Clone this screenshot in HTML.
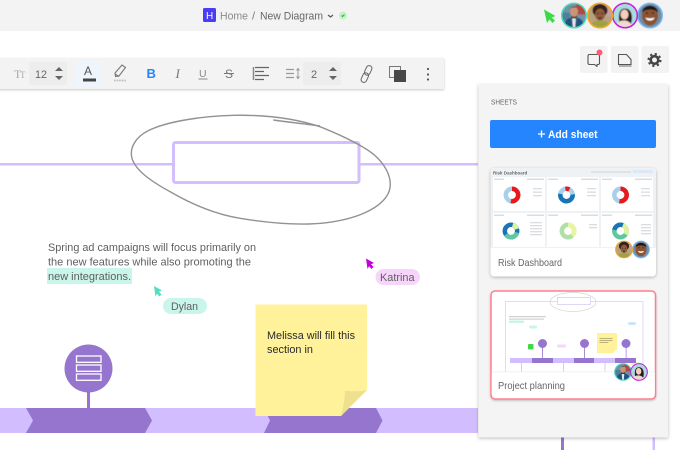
<!DOCTYPE html>
<html><head><meta charset="utf-8"><style>
html,body{margin:0;padding:0;width:680px;height:450px;overflow:hidden;background:#fff}
svg{display:block}
text{font-family:"Liberation Sans",sans-serif}
</style></head><body>
<svg width="680" height="450" viewBox="0 0 680 450" xmlns="http://www.w3.org/2000/svg">
<defs>
<filter id="sh" x="-10%" y="-10%" width="120%" height="120%"><feDropShadow dx="0" dy="1" stdDeviation="1.500" flood-color="#000" flood-opacity=".28"/></filter>
<filter id="sh2" x="-10%" y="-10%" width="120%" height="120%"><feDropShadow dx="0" dy="1" stdDeviation="1" flood-color="#000" flood-opacity=".22"/></filter>
<filter id="bl"><feGaussianBlur stdDeviation=".5"/></filter>
<filter id="bl2"><feGaussianBlur stdDeviation=".3"/></filter>
<clipPath id="av"><circle cx="0" cy="0" r="12"/></clipPath>
<g id="a1"><g clip-path="url(#av)"><g filter="url(#bl)"><rect x="-13" y="-13" width="26" height="26" fill="#6f93a8"/><rect x="2" y="-13" width="11" height="12" fill="#b2493f"/><rect x="-13" y="-3" width="9" height="8" fill="#4d7f9c"/><path d="M-10 13c0-9 4-11 10-11s10 2 10 11z" fill="#24527f"/><path d="M-2 2h4l-1 11h-2z" fill="#e3e8ee"/><ellipse cx="0" cy="-4" rx="4" ry="5.500" fill="#c89677"/><path d="M-4-6c0-4 8-4 8 0l-1-2h-6z" fill="#2b2320"/><path d="M-3.500-1c1 3 6 3 7 0l-1 4h-5z" fill="#4a3228"/></g></g><circle r="12.300" fill="none" stroke="#4fdcc0" stroke-width="1.500"/></g>
<g id="a2"><g clip-path="url(#av)"><g filter="url(#bl)"><rect x="-13" y="-13" width="26" height="26" fill="#b9a27a"/><rect x="3" y="-13" width="10" height="14" fill="#c9a0a0"/><ellipse cx="0" cy="-5" rx="7.500" ry="6.500" fill="#33241c"/><ellipse cx="0" cy="-1" rx="5" ry="6" fill="#8f5c3e"/><path d="M-10 13c0-6 4-8 10-8s10 2 10 8z" fill="#9da24a"/><ellipse cx="0" cy="2.500" rx="1.800" ry="1" fill="#5b2b22"/><circle cx="-2" cy="-2" r=".7" fill="#1c1210"/><circle cx="2" cy="-2" r=".7" fill="#1c1210"/></g></g><circle r="12.300" fill="none" stroke="#f5a623" stroke-width="1.500"/></g>
<g id="a3"><g clip-path="url(#av)"><g filter="url(#bl)"><rect x="-13" y="-13" width="26" height="26" fill="#a9dbdc"/><path d="M-5 10c-2-8-2-17 5-17 7 0 8 9 6 15l-3 2z" fill="#211a1c"/><ellipse cx="-.5" cy="-1" rx="4" ry="5" fill="#f4cdbb"/><path d="M-9 13c0-6 3-8 8-8s8 3 8 8z" fill="#f0d9cf"/></g></g><circle r="12.300" fill="none" stroke="#c21fe0" stroke-width="1.500"/></g>
<g id="a4"><g clip-path="url(#av)"><g filter="url(#bl)"><rect x="-13" y="-13" width="26" height="26" fill="#6f8ea8"/><ellipse cx="0" cy="0" rx="8" ry="10" fill="#8a5233"/><path d="M-8-3c0-9 16-9 16 0-3-4-13-4-16 0z" fill="#1e1512"/><path d="M-4.500 2c2 1 7 1 9 0-.5 4-8.500 4-9 0z" fill="#fff"/><circle cx="-3" cy="-2.500" r=".8" fill="#140d0b"/><circle cx="3" cy="-2.500" r=".8" fill="#140d0b"/></g></g><circle r="12.300" fill="none" stroke="#7bbcf5" stroke-width="1.500"/></g>
</defs>

<rect width="680" height="450" fill="#fff"/>
<rect width="680" height="31" fill="#f3f3f3"/>

<!-- breadcrumb -->
<rect x="203" y="8" width="13" height="14" rx="1.500" fill="#4a3df2"/>
<text x="206" y="19" font-size="10" fill="#fff">H</text>
<text x="220" y="19.500" font-size="11" fill="#8a8a8a" textLength="28" lengthAdjust="spacingAndGlyphs">Home</text>
<text x="252" y="19.500" font-size="11" fill="#777">/</text>
<text x="260" y="19.500" font-size="11" fill="#666" textLength="63" lengthAdjust="spacingAndGlyphs">New Diagram</text>
<path d="M328 15l2.500 2 2.500-2" fill="none" stroke="#555" stroke-width="1.200"/>
<circle cx="343" cy="15.500" r="4" fill="#c5f1c5"/>
<path d="M341.500 15.500l1 1 2-2" fill="none" stroke="#2fa84a" stroke-width="1"/>

<!-- presence -->
<path d="M544 9.500l11.500 6.500-4 1.500 3.500 3-2.500 2.500-3-3.500-2.500 3.500z" fill="#3fd84a"/>
<use href="#a4" x="650" y="15.500"/>
<use href="#a3" x="625" y="15.500"/>
<use href="#a2" x="600" y="15.500"/>
<use href="#a1" x="574" y="15.500"/>

<!-- canvas: line + rect -->
<rect x="0" y="163" width="172" height="2.500" fill="#d2bdff"/>
<rect x="360" y="163" width="118" height="2.500" fill="#d2bdff"/>
<rect x="173.500" y="142.500" width="185.500" height="40" rx="2" fill="#fff" stroke="#d2bfff" stroke-width="3"/>
<g transform="translate(120 110) scale(.3333)" fill="none" stroke="#929292" stroke-width="4.200">
<path d="M460 30C500 36 560 42 600 48"/>
<path d="M600 50C520 24 430 14 340 16C250 18 140 34 85 62C45 82 28 115 36 145C46 180 90 212 150 245C210 280 280 312 360 325C440 338 540 348 620 338C700 328 780 300 805 250C825 205 790 145 730 112C690 88 640 66 600 50"/>
</g>

<!-- toolbar -->
<rect x="-6" y="58" width="450" height="31" fill="#f3f3f3" filter="url(#sh2)"/>
<text x="14" y="78" font-size="12" fill="#aaa" style="font-family:'Liberation Serif',serif">T</text>
<text x="20" y="78" font-size="9" fill="#aaa" style="font-family:'Liberation Serif',serif">T</text>
<rect x="29" y="62" width="38" height="23" rx="1" fill="#ededed"/>
<text x="35" y="78" font-size="11" fill="#666" textLength="12" lengthAdjust="spacingAndGlyphs">12</text>
<path d="M55 71l4-4 4 4zM55 76l4 4 4-4z" fill="#666"/>
<rect x="76" y="61" width="26" height="26" rx="1" fill="#eef5fd"/>
<text x="84" y="75" font-size="12" fill="#555">A</text>
<rect x="83" y="78.500" width="13" height="3" fill="#444"/>
<path d="M115 73l7-8 3.500 2.500-6.500 8.500-3.500.5z" fill="none" stroke="#777" stroke-width="1.100"/>
<path d="M115 74l4 2.500" stroke="#777" stroke-width="1.100"/>
<path d="M114 80.500h12" stroke="#bbb" stroke-width="1.800" stroke-dasharray="1 .6"/>
<text x="146.500" y="78" font-size="13" font-weight="bold" fill="#2485ff">B</text>
<text x="175.500" y="78" font-size="13" fill="#777" style="font-family:'Liberation Serif',serif" font-style="italic">I</text>
<text x="199" y="77" font-size="10.500" fill="#888">U</text>
<rect x="198.500" y="78.500" width="9" height="1" fill="#888"/>
<text x="225" y="78" font-size="12" fill="#777">S</text>
<rect x="224" y="73" width="10" height="1" fill="#777"/>
<path d="M253.500 67v13" stroke="#888" stroke-width="1.500"/>
<path d="M255 67.500h14M255 71.500h9M255 75.500h14M255 79.500h9" stroke="#666" stroke-width="1.200"/>
<path d="M286 69.500h8M286 73.500h8M286 77.500h8" stroke="#999" stroke-width="1.200"/>
<path d="M298 69v9M296.500 70.500l1.500-2 1.500 2M296.500 76.500l1.500 2 1.500-2" fill="none" stroke="#999" stroke-width="1"/>
<rect x="303" y="62" width="38" height="23" rx="1" fill="#ededed"/>
<text x="311" y="78" font-size="11" fill="#666">2</text>
<path d="M329 71l4-4 4 4zM329 76l4 4 4-4z" fill="#666"/>
<g transform="rotate(25 366.500 74)" fill="none" stroke="#666" stroke-width="1"><rect x="363.700" y="65" width="5.600" height="10" rx="2.800"/><rect x="363.700" y="73" width="5.600" height="10" rx="2.800"/></g>
<rect x="389.500" y="66.500" width="11" height="11" fill="#f3f3f3" stroke="#777" stroke-width="1"/>
<rect x="394" y="70" width="12" height="12" fill="#484848"/>
<circle cx="428" cy="69" r="1.100" fill="#555"/><circle cx="428" cy="74.500" r="1.100" fill="#555"/><circle cx="428" cy="79.500" r="1.100" fill="#555"/>

<!-- text block -->
<rect x="47" y="268" width="85" height="16" fill="#c9f5ea"/>
<text x="48" y="251" font-size="11" fill="#5f5f5f" textLength="208" lengthAdjust="spacingAndGlyphs">Spring ad campaigns will focus primarily on</text>
<text x="48" y="265.500" font-size="11" fill="#5f5f5f" textLength="203" lengthAdjust="spacingAndGlyphs">the new features while also promoting the</text>
<text x="48" y="280" font-size="11" fill="#5f5f5f" textLength="83" lengthAdjust="spacingAndGlyphs">new integrations.</text>

<!-- cursors -->
<path d="M154 286l8 4.500-3 1.300 2.500 2.700-2 2-2.500-2.800-1.500 2.800z" fill="#52dcc0"/>
<rect x="163" y="298" width="44" height="16" rx="8" fill="#c9f5ea"/>
<text x="171" y="310" font-size="11" fill="#5f5f5f" textLength="27" lengthAdjust="spacingAndGlyphs">Dylan</text>
<path d="M366 258.500l8 4.500-3 1.300 2.500 2.700-2 2-2.500-2.800-1.500 2.800z" fill="#c600dc"/>
<rect x="375.500" y="269" width="44.500" height="16" rx="8" fill="#f7d4fb"/>
<text x="380" y="281" font-size="11" fill="#5f5f5f" textLength="34.500" lengthAdjust="spacingAndGlyphs">Katrina</text>

<!-- timeline -->
<rect x="0" y="408" width="478" height="25" fill="#d2bdff"/>
<polygon points="26,408 145,408 152,420.500 145,433 26,433 33,420.500" fill="#9575cd"/>
<polygon points="264,408 376,408 382.500,420.500 376,433 264,433 270,420.500" fill="#9575cd"/>
<rect x="87" y="390" width="3" height="18" fill="#9575cd"/>
<circle cx="88.500" cy="368.500" r="24" fill="#9575cd"/>
<g fill="none" stroke="#fff" stroke-width="1.300"><rect x="76.500" y="356" width="24.500" height="6.300"/><rect x="76.500" y="365" width="24.500" height="6.300"/><rect x="76.500" y="374" width="24.500" height="6.300"/></g>

<!-- sticky -->
<polygon points="255.500,304.500 367,304.500 367,390 341,416 255.500,416" fill="#fff29b"/>
<path d="M345 391c6 0 15 1 22-1l-26 26c2-8 4-17 4-25z" fill="#ede08f"/>
<text x="267" y="339" font-size="11" fill="#2a2a2a" textLength="88" lengthAdjust="spacingAndGlyphs">Melissa will fill this</text>
<text x="267" y="353" font-size="11" fill="#2a2a2a" textLength="46" lengthAdjust="spacingAndGlyphs">section in</text>

<!-- right buttons -->
<rect x="580" y="46" width="27.500" height="27" rx="2" fill="#f3f3f3"/>
<rect x="611" y="46" width="27.500" height="27" rx="2" fill="#f3f3f3"/>
<rect x="641.500" y="46" width="27.500" height="27" rx="2" fill="#f3f3f3"/>
<path d="M589.500 54.500h8.500a1.500 1.500 0 0 1 1.500 1.500v7a1.500 1.500 0 0 1-1.500 1.500h-1v2l-2.500-2h-5a1.500 1.500 0 0 1-1.500-1.500v-7a1.500 1.500 0 0 1 1.500-1.500z" fill="none" stroke="#555" stroke-width="1.100" stroke-linejoin="round"/>
<circle cx="599.500" cy="52.500" r="3" fill="#ff5a78"/>
<path d="M618.500 54.500h8l4.500 5v5h-12.500z" fill="none" stroke="#555" stroke-width="1.100"/>
<path d="M619 66h12.500" stroke="#999" stroke-width="1.500"/>
<circle cx="654.500" cy="60" r="3.800" fill="none" stroke="#444" stroke-width="2.600"/>
<circle cx="654.500" cy="60" r="6" fill="none" stroke="#444" stroke-width="2" stroke-dasharray="2.200 2.510"/>

<!-- panel -->
<rect x="561" y="436" width="3" height="14" fill="#9575cd"/>
<rect x="652.500" y="436" width="2.500" height="14" fill="#d2bdff"/>
<rect x="478.500" y="84.500" width="189.500" height="353" fill="#f4f4f4" filter="url(#sh)"/>
<text x="491" y="104.500" font-size="7.500" fill="#666" textLength="26" lengthAdjust="spacingAndGlyphs">SHEETS</text>
<rect x="490" y="120" width="166" height="28" rx="2" fill="#2485ff"/>
<path d="M538 134h7M541.500 130.500v7" stroke="#fff" stroke-width="1.300"/>
<text x="548" y="138" font-size="11" fill="#fff" font-weight="bold" textLength="49.500" lengthAdjust="spacingAndGlyphs">Add sheet</text>

<!-- card 1 -->
<rect x="490.500" y="168" width="165.500" height="108.500" rx="4" fill="#fff" filter="url(#sh)"/>
<path d="M490.500 248v-76a4 4 0 0 1 4-4h157.500a4 4 0 0 1 4 4v76z" fill="#eef2f4"/>
<text x="493" y="174.500" font-size="4.500" font-weight="bold" fill="#666">Risk Dashboard</text>
<g filter="url(#bl2)">
<rect x="591" y="171" width="40" height="2" fill="#e0e3e5"/><rect x="633" y="170" width="20" height="3" fill="#dce9f5"/>
</g>
<g fill="#fff">
<rect x="493" y="177" width="52" height="34"/><rect x="547" y="177" width="52" height="34"/><rect x="601" y="177" width="52" height="34"/>
<rect x="493" y="213" width="52" height="34"/><rect x="547" y="213" width="52" height="34"/><rect x="601" y="213" width="52" height="34"/>
</g>
<g fill="#dadde0" filter="url(#bl2)">
<rect x="494" y="178.500" width="10" height="1.500"/><rect x="548" y="178.500" width="10" height="1.500"/><rect x="602" y="178.500" width="10" height="1.500"/>
<rect x="494" y="214.500" width="10" height="1.500"/><rect x="548" y="214.500" width="10" height="1.500"/><rect x="602" y="214.500" width="10" height="1.500"/>
<rect x="527" y="178.500" width="17" height="1.500"/><rect x="581" y="178.500" width="17" height="1.500"/><rect x="635" y="178.500" width="17" height="1.500"/>
<rect x="527" y="214.500" width="17" height="1.500"/><rect x="581" y="214.500" width="17" height="1.500"/><rect x="635" y="214.500" width="17" height="1.500"/>
<rect x="533" y="188" width="9" height="1.300"/><rect x="533" y="191.500" width="9" height="1.300"/><rect x="533" y="195" width="9" height="1.300"/>
<rect x="587" y="188" width="9" height="1.300"/><rect x="587" y="191.500" width="9" height="1.300"/><rect x="587" y="195" width="9" height="1.300"/>
<rect x="641" y="188" width="9" height="1.300"/><rect x="641" y="191.500" width="9" height="1.300"/><rect x="641" y="195" width="9" height="1.300"/>
<rect x="530" y="222" width="12" height="1.300"/><rect x="530" y="225" width="12" height="1.300"/><rect x="530" y="228" width="12" height="1.300"/><rect x="530" y="231" width="12" height="1.300"/><rect x="530" y="234" width="12" height="1.300"/>
<rect x="589" y="224" width="8" height="1.300"/><rect x="589" y="227" width="8" height="1.300"/>
<rect x="641" y="224" width="10" height="1.300"/><rect x="641" y="227" width="10" height="1.300"/><rect x="641" y="230" width="10" height="1.300"/><rect x="641" y="233" width="10" height="1.300"/>
</g>
<g fill="none" stroke-width="4.500">
<circle cx="512" cy="195" r="6.200" stroke="#a8d0e8"/>
<circle cx="512" cy="195" r="6.200" stroke="#e8191e" stroke-dasharray="20.500 39" transform="rotate(-90 512 195)"/>
<circle cx="566.500" cy="195" r="6.200" stroke="#a8d0e8"/>
<circle cx="566.500" cy="195" r="6.200" stroke="#1a75b8" stroke-dasharray="21 39" transform="rotate(-5 566.500 195)"/>
<circle cx="566.500" cy="195" r="6.200" stroke="#e8191e" stroke-dasharray="4 39" transform="rotate(-100 566.500 195)"/>
<circle cx="620.500" cy="195" r="6.200" stroke="#a8d0e8"/>
<circle cx="620.500" cy="195" r="6.200" stroke="#e8191e" stroke-dasharray="20.500 39" transform="rotate(-90 620.500 195)"/>
<circle cx="511" cy="231" r="6.200" stroke="#1a75b8"/>
<circle cx="511" cy="231" r="6.200" stroke="#60c8a0" stroke-dasharray="14 39" transform="rotate(15 511 231)"/>
<circle cx="511" cy="231" r="6.200" stroke="#dff2a0" stroke-dasharray="6 39" transform="rotate(-75 511 231)"/>
<circle cx="568" cy="231" r="6.200" stroke="#b0e0a8"/>
<circle cx="568" cy="231" r="6.200" stroke="#e6f5a0" stroke-dasharray="15 39" transform="rotate(-90 568 231)"/>
<circle cx="620.500" cy="231" r="6.200" stroke="#60c8a0"/>
<circle cx="620.500" cy="231" r="6.200" stroke="#dff2a0" stroke-dasharray="11 39" transform="rotate(-70 620.500 231)"/>
<circle cx="620.500" cy="231" r="6.200" stroke="#1a75b8" stroke-dasharray="11 39" transform="rotate(-170 620.500 231)"/>
</g>
<text x="498" y="266" font-size="10.500" fill="#666" textLength="64" lengthAdjust="spacingAndGlyphs">Risk Dashboard</text>
<use href="#a4" transform="translate(641 249.500) scale(.68)"/>
<use href="#a2" transform="translate(624 249.500) scale(.68)"/>

<!-- card 2 -->
<rect x="491" y="291" width="164.500" height="108" rx="4" fill="#fff" stroke="#ff7f90" stroke-width="1.500" filter="url(#sh2)"/>
<g fill="none">
<rect x="505.500" y="301.500" width="137.500" height="75" stroke="#e3d9fb" stroke-width="1"/>
<rect x="557.500" y="297.500" width="33" height="7" fill="#fff" stroke="#e0d6f8" stroke-width="1"/>
<ellipse cx="573" cy="302" rx="23" ry="9.500" stroke="#d3d3d3" stroke-width=".7"/>
</g>
<g fill="#d0d0d0" filter="url(#bl2)"><rect x="509" y="316" width="37" height="1.200"/><rect x="509" y="318.500" width="35" height="1.200"/></g>
<rect x="509" y="320.500" width="15" height="2.500" fill="#c9f5ea"/>
<rect x="529" y="325.500" width="8" height="3" rx="1.500" fill="#c9f5ea"/>
<rect x="628" y="322" width="8" height="3" rx="1.500" fill="#cce5fa"/>
<rect x="557" y="344.500" width="9" height="3" rx="1.500" fill="#f7d4fb"/>
<rect x="631" y="362" width="8" height="3" rx="1.500" fill="#fde7c4"/>
<rect x="528" y="344" width="5.500" height="5.500" rx="1" fill="#3fd84a"/>
<rect x="510" y="358" width="126" height="5" fill="#d2bdff"/>
<rect x="532" y="358" width="21" height="5" fill="#9575cd"/><rect x="574" y="358" width="20" height="5" fill="#9575cd"/><rect x="615" y="358" width="21" height="5" fill="#9575cd"/>
<g fill="#a78bd8"><rect x="542" y="347" width="1" height="11"/><rect x="584" y="347" width="1" height="11"/></g>
<rect x="625.500" y="347" width="1.500" height="11" fill="#d2bdff"/>
<circle cx="542.500" cy="343.500" r="4.500" fill="#9575cd"/><circle cx="584.500" cy="343.500" r="4.500" fill="#9575cd"/><circle cx="626" cy="343.500" r="4.500" fill="#9575cd"/>
<polygon points="597,333 617,333 617,349 613,353 597,353" fill="#fff29b"/>
<g fill="#a8a36a"><rect x="599.500" y="338" width="13" height=".8"/><rect x="599.500" y="340" width="13" height=".8"/><rect x="599.500" y="342" width="9" height=".8"/></g>
<g fill="#d8cef5"><rect x="521" y="363" width="1" height="10"/><rect x="563" y="363" width="1" height="10"/><rect x="604.500" y="363" width="1" height="10"/></g>
<path d="M491.800 372h163v21.500a4 4 0 0 1-4 4h-155a4 4 0 0 1-4-4z" fill="#fff"/>
<rect x="491.800" y="371.500" width="163" height=".8" fill="#eee"/>
<text x="498" y="389" font-size="10.500" fill="#666" textLength="67" lengthAdjust="spacingAndGlyphs">Project planning</text>
<use href="#a1" transform="translate(623 372) scale(.68)"/>
<use href="#a3" transform="translate(639 372) scale(.68)"/>
</svg>
</body></html>
